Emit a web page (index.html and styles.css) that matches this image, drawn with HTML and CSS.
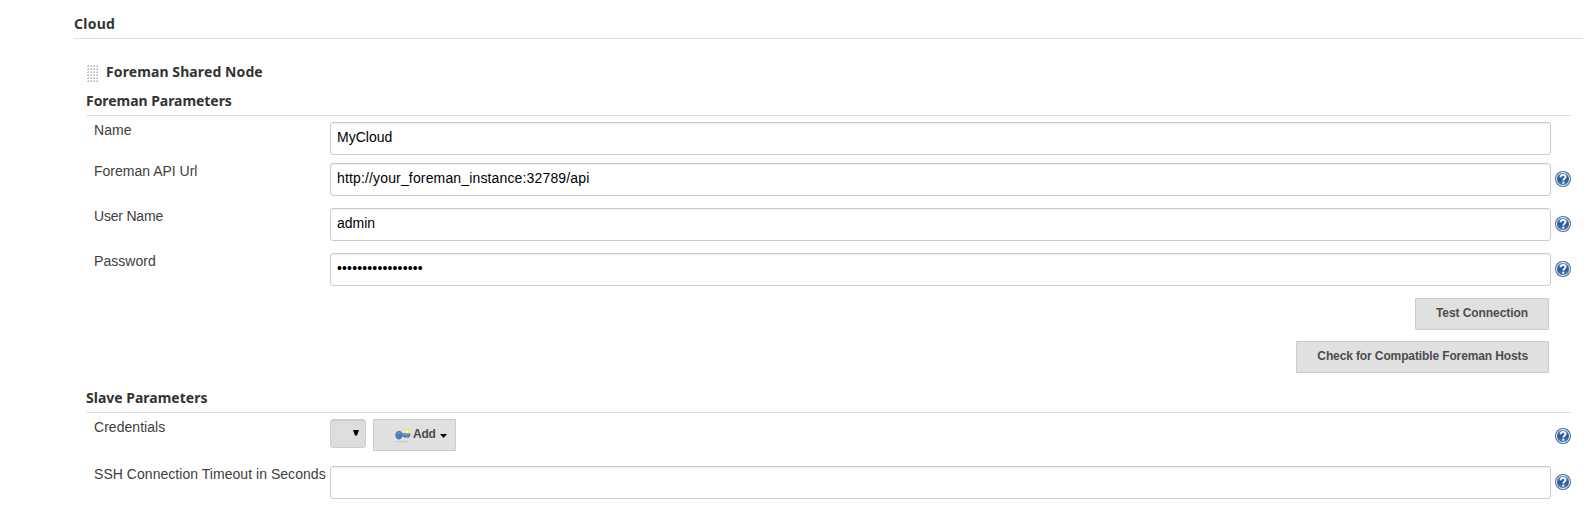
FILE: index.html
```
<!DOCTYPE html>
<html lang="en">
<head>
<meta charset="utf-8">
<title>Cloud</title>
<link rel="stylesheet" href="styles.css">
</head>
<body>
<svg class="defs" width="0" height="0">
  <defs>
    <linearGradient id="blue" x1="0" y1="0" x2="0" y2="1">
      <stop offset="0" stop-color="#6c91c0"/>
      <stop offset=".5" stop-color="#2b5796"/>
      <stop offset="1" stop-color="#5380b8"/>
    </linearGradient>
    <symbol id="help" viewBox="0 0 16 16">
      <circle cx="8" cy="8" r="8" fill="#4670a9"/>
      <circle cx="8" cy="8" r="6.5" fill="url(#blue)" stroke="#f1f5fa" stroke-width="1"/>
      <path d="M5.6 6.3C5.6 4.5 6.7 3.8 8.1 3.8s2.4.9 2.4 2.2c0 1.6-2.2 1.8-2.2 3.6" fill="none" stroke="#fff" stroke-width="1.8"/>
      <rect x="7.3" y="10.7" width="2" height="1.9" fill="#fff"/>
    </symbol>
    <pattern id="dots" width="3" height="3" patternUnits="userSpaceOnUse">
      <rect x="2" y="0" width="1" height="1" fill="#b8b8b8"/>
      <rect x="1" y="1" width="1" height="1" fill="#b8b8b8"/>
      <rect x="2" y="1" width="1" height="1" fill="#cecece"/>
    </pattern>
  </defs>
</svg>
<main class="page">
  <h1 class="heading heading-cloud">Cloud</h1>
  <section class="cloud">
    <div class="node-title">
      <svg class="grip" width="12" height="18"><rect width="12" height="18" fill="url(#dots)"/></svg>
      <h2 class="title title-node">Foreman Shared Node</h2>
    </div>
    <h3 class="heading heading-foreman">Foreman Parameters</h3>
    <div class="row row-name">
      <label class="label">Name</label><div class="field field-name">MyCloud</div>
    </div>
    <div class="row">
      <label class="label label-api">Foreman API Url</label><div class="field">http://your_foreman_instance:32789/api</div>
      <svg class="help"><use href="#help"/></svg>
    </div>
    <div class="row">
      <label class="label label-user">User Name</label><div class="field field-user">admin</div>
      <svg class="help"><use href="#help"/></svg>
    </div>
    <div class="row">
      <label class="label">Password</label><div class="field field-password">•••••••••••••••••</div>
      <svg class="help"><use href="#help"/></svg>
    </div>
    <div class="actions">
      <button class="button">Test Connection</button>
      <button class="button button-check">Check for Compatible Foreman Hosts</button>
    </div>
    <h3 class="heading heading-slave">Slave Parameters</h3>
    <div class="row row-credentials">
      <label class="label">Credentials</label>
      <div class="controls">
        <div class="select"><svg width="6" height="6"><path d="M0 0h6L4 5.5H2z"/></svg></div>
        <button class="button add">
          <svg class="key" width="16" height="16" viewBox="0 0 16 16">
            <ellipse cx="7.5" cy="13.5" rx="6.5" ry=".7" fill="#c8c8c8"/>
            <path d="M10 .8l1.2.8 1-1 1 1 1.5-.2-.1 1.5 1 1-1 1 .1 1.5-1.5-.1-1 1-1-1-1.5.1.2-1.5-.9-1.1.9-1z" fill="#f5ee3d"/>
            <circle cx="12.1" cy="3.6" r="1.5" fill="#fffcbd"/>
            <path d="M.5 7Q1 3.4 4.2 3.1 6.5 3.3 7.2 5.5L15 5.8V8.2H13.8V9.5H12.2V8.4H10.8V9.5H9.3V8.4L7.2 8.4Q6 11.3 3.8 11.3.8 11 .5 7z" fill="#4f7ebd" stroke="#396aa8" stroke-width=".5"/>
            <path d="M2 6Q3.3 4 5.6 5.1M7.5 6.6h6.6" fill="none" stroke="#87aedb" stroke-width=".8"/>
          </svg>
          <span>Add</span>
          <svg class="caret" width="7" height="4"><path d="M0 0h7L3.5 4z"/></svg>
        </button>
      </div>
      <svg class="help"><use href="#help"/></svg>
    </div>
    <div class="row row-ssh">
      <label class="label">SSH Connection Timeout in Seconds</label><div class="field"></div>
      <svg class="help"><use href="#help"/></svg>
    </div>
  </section>
</main>
</body>
</html>
```
FILE: styles.css
```
* { box-sizing: border-box; }
body { margin: 0; background: #fff; color: #333; font-family: "Liberation Sans", sans-serif; font-size: 14px; overflow: hidden; }
.defs { display: block; }
.page { padding: 0 10px 0 74px; }
.heading, .title { margin: 0; font: bold 14px/20px "Noto Sans", sans-serif; color: #333; white-space: nowrap; }
.heading { border-bottom: 1px solid #dedede; }
.heading-cloud { height: 39px; padding-top: 14px; letter-spacing: .25px; }
.cloud { padding: 0 12px; }
.node-title { display: flex; height: 52px; padding-top: 23px; gap: 8px; }
.title-node { letter-spacing: .1px; }
.grip { margin-top: 3px; }
.heading-foreman { height: 25px; letter-spacing: -.05px; }
.row { display: grid; grid-template-columns: 244px 1221px 16px; height: 45px; align-items: start; }
.row-name { height: 41px; }
.heading-foreman + .row { padding-top: 6px; height: 47px; }
.label { padding-left: 8px; height: 33px; line-height: 17px; letter-spacing: .04px; color: #404040; white-space: nowrap; }
.label-api { letter-spacing: 0; }
.label-user { letter-spacing: -.2px; }
.field { height: 33px; border: 1px solid #ccc; border-radius: 3px; box-shadow: inset 0 1px 1px rgba(0,0,0,.075); padding: 0 6px; line-height: 29px; color: #000; letter-spacing: .15px; white-space: nowrap; }
.field-name, .field-user { letter-spacing: 0; }
.help { width: 16px; height: 16px; margin: 8px 0 0 4px; }
.actions { display: flex; flex-direction: column; align-items: flex-end; gap: 11px; padding-right: 22px; }
.button { height: 32px; margin: 0; padding: 0 20px 2px; border: 1px solid #ccc; border-radius: 1px; background: #e0e0e0; color: #4d4d4d; font: bold 12px "Liberation Sans", sans-serif; letter-spacing: -.07px; white-space: nowrap; }
.button-check { letter-spacing: -.12px; }
.heading-slave { height: 40px; padding-top: 15px; }
.row-credentials { padding-top: 6px; height: 53px; }
.row-credentials + .row { height: 40px; }
.controls { display: flex; gap: 7px; }
.select { width: 36px; height: 29px; border: 1px solid #ccc; border-radius: 3px; background: #ddd; box-shadow: inset 0 1px 1px rgba(0,0,0,.075); padding: 10px 6px; display: flex; justify-content: flex-end; }
.add { width: 83px; display: flex; align-items: center; padding: 0 0 2px 21px; letter-spacing: -.2px; }
.key { margin-top: 3px; margin-right: 2px; }
.caret { margin: 3px 0 0 4px; }
.row-credentials .help { margin-top: 9px; }
```
